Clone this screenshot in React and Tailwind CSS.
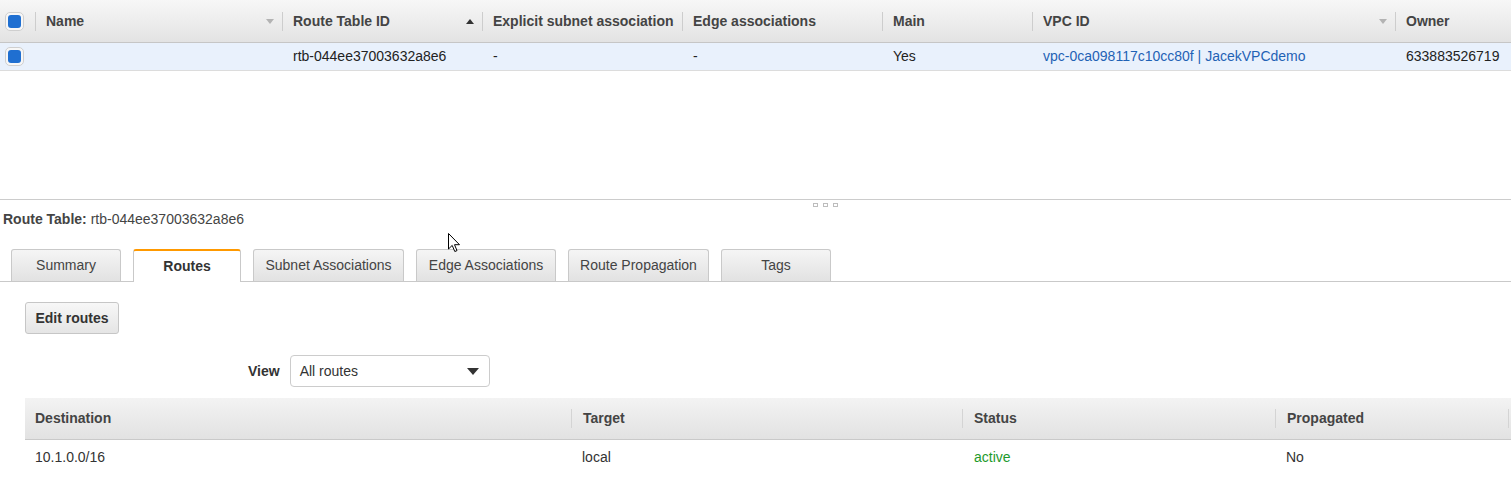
import React from 'react';

const TOP_COLS = [
  { key: 'name', label: 'Name', width: 'w-[247px]', sort: 'down' },
  { key: 'rtb', label: 'Route Table ID', width: 'w-[200px]', sort: 'up' },
  { key: 'explicit', label: 'Explicit subnet associations', width: 'w-[200px]' },
  { key: 'edge', label: 'Edge associations', width: 'w-[200px]' },
  { key: 'main', label: 'Main', width: 'w-[150px]' },
  { key: 'vpc', label: 'VPC ID', width: 'w-[363px]', sort: 'down' },
  { key: 'owner', label: 'Owner', width: 'flex-1' },
];

const ROW = {
  name: '',
  rtb: 'rtb-044ee37003632a8e6',
  explicit: '-',
  edge: '-',
  main: 'Yes',
  vpc: 'vpc-0ca098117c10cc80f | JacekVPCdemo',
  owner: '633883526719',
};

const TABS = [
  { label: 'Summary', width: 'w-[110px]' },
  { label: 'Routes', width: 'w-[108px]', active: true },
  { label: 'Subnet Associations', width: 'w-[151px]' },
  { label: 'Edge Associations', width: 'w-[140px]' },
  { label: 'Route Propagation', width: 'w-[141px]' },
  { label: 'Tags', width: 'w-[110px]' },
];

const ROUTE_COLS = [
  { label: 'Destination', width: 'w-[546px]', first: true },
  { label: 'Target', width: 'w-[391px]' },
  { label: 'Status', width: 'w-[313px]' },
  { label: 'Propagated', width: 'w-[233px]' },
];

function Checkbox() {
  return (
    <div className="w-[19px] h-[19px] rounded-[5px] border border-[#cfcfcf] bg-[#f7f7f7] p-[2px]">
      <div className="w-full h-full rounded-[3px] bg-[#1f6fd1]" />
    </div>
  );
}

function SortIcon({ dir }) {
  if (dir === 'up') {
    return (
      <svg width="8" height="5" viewBox="0 0 8 5" className="shrink-0">
        <path d="M0 5 L4 0 L8 5 Z" fill="#333" />
      </svg>
    );
  }
  return (
    <svg width="8" height="5" viewBox="0 0 8 5" className="shrink-0">
      <path d="M0 0 L8 0 L4 5 Z" fill="#b3b3b3" />
    </svg>
  );
}

function Cursor() {
  return (
    <svg
      width="13"
      height="20"
      viewBox="0 0 13 20"
      className="absolute left-[448px] top-[233px] pointer-events-none"
    >
      <path
        d="M0.5 0.5 L0.5 16 L4.2 12.4 L6.8 18.5 L9 17.6 L6.5 11.7 L11.5 11.7 Z"
        fill="#fff"
        stroke="#000"
        strokeWidth="1"
        strokeLinejoin="round"
      />
    </svg>
  );
}

export default function App() {
  return (
    <div
      className="relative w-[1511px] h-[502px] overflow-hidden bg-white text-[14px] text-[#333]"
      style={{ fontFamily: '"Liberation Sans", Arial, sans-serif' }}
    >
      {/* top grid */}
      <div className="h-[199px]">
        <div className="flex h-[43px] border-b border-[#c6c6c6] bg-gradient-to-b from-[#f7f7f7] to-[#e3e3e3]">
          <div className="w-[35px] shrink-0 flex items-center pl-[5px]">
            <Checkbox />
          </div>
          {TOP_COLS.map((c) => (
            <div key={c.key} className={`${c.width} shrink-0 flex items-center min-w-0`}>
              <div className="w-px h-[19px] bg-[#cdcdcd] shrink-0" />
              <div className="flex flex-1 items-center min-w-0 pl-[10px] pr-[8px]">
                <span className="flex-1 font-bold text-[#444] whitespace-nowrap overflow-hidden">
                  {c.label}
                </span>
                {c.sort && <SortIcon dir={c.sort} />}
              </div>
            </div>
          ))}
        </div>
        <div className="flex h-[28px] border-b border-[#dcdcdc] bg-[#e9f1fc]">
          <div className="w-[35px] shrink-0 flex items-center pl-[5px]">
            <Checkbox />
          </div>
          {TOP_COLS.map((c) => (
            <div
              key={c.key}
              className={`${c.width} shrink-0 flex items-center pl-[11px] whitespace-nowrap overflow-hidden ${
                c.key === 'vpc' ? 'text-[#1f62b5]' : 'text-[#222]'
              }`}
            >
              {ROW[c.key]}
            </div>
          ))}
        </div>
      </div>

      {/* detail pane */}
      <div className="border-t border-[#cccccc]">
        <div className="h-[11px] flex pl-[813px] pt-[3px] gap-[5px]">
          <div className="w-[5px] h-[4px] border border-[#bdbdbd]" />
          <div className="w-[5px] h-[4px] border border-[#bdbdbd]" />
          <div className="w-[5px] h-[4px] border border-[#bdbdbd]" />
        </div>
        <div className="h-[16px] leading-[16px] pl-[3px]">
          <span className="font-bold text-[#444]">Route Table:</span>{' '}
          <span className="text-[#444]">rtb-044ee37003632a8e6</span>
        </div>

        <div className="mt-[22px] flex items-end gap-[12px] pl-[11px] h-[33px] border-b border-[#c9c9c9]">
          {TABS.map((t) =>
            t.active ? (
              <div
                key={t.label}
                className={`${t.width} h-[33px] -mb-px flex items-center justify-center bg-white border border-b-0 border-[#c9c9c9] border-t-2 border-t-[#ff9900] rounded-t-[3px] font-bold text-[#333]`}
              >
                {t.label}
              </div>
            ) : (
              <div
                key={t.label}
                className={`${t.width} h-[32px] flex items-center justify-center bg-gradient-to-b from-[#f5f5f5] to-[#e2e2e2] border border-b-0 border-[#c9c9c9] rounded-t-[3px] text-[#444]`}
              >
                {t.label}
              </div>
            )
          )}
        </div>

        <div className="pl-[25px] mt-[20px]">
          <button className="w-[94px] h-[32px] rounded-[3px] border border-[#c6c6c6] bg-gradient-to-b from-[#f7f7f7] to-[#e5e5e5] font-bold text-[#333]">
            Edit routes
          </button>
        </div>

        <div className="flex items-center mt-[21px] pl-[248px]">
          <span className="font-bold text-[#333]">View</span>
          <div className="ml-[10px] w-[200px] h-[32px] border border-[#cccccc] rounded-[4px] flex items-center justify-between pl-[9px] pr-[10px]">
            <span className="text-[#333]">All routes</span>
            <svg width="12" height="7" viewBox="0 0 12 7">
              <path d="M0 0 L12 0 L6 7 Z" fill="#333" />
            </svg>
          </div>
        </div>

        <div className="ml-[25px] mt-[11px]">
          <div className="flex h-[42px] border-b border-[#c9c9c9] bg-gradient-to-b from-[#f3f3f3] to-[#e2e2e2]">
            {ROUTE_COLS.map((c) => (
              <div key={c.label} className={`${c.width} shrink-0 flex items-center`}>
                {!c.first && <div className="w-px h-[19px] bg-[#d4d4d4] shrink-0" />}
                <span className={`font-bold text-[#444] ${c.first ? 'pl-[10px]' : 'pl-[11px]'}`}>
                  {c.label}
                </span>
              </div>
            ))}
            <div className="w-px h-[19px] bg-[#d4d4d4] shrink-0 self-center" />
          </div>
          <div className="flex h-[34px] items-center">
            <div className="w-[546px] shrink-0 pl-[10px] text-[#333]">10.1.0.0/16</div>
            <div className="w-[391px] shrink-0 pl-[11px] text-[#333]">local</div>
            <div className="w-[313px] shrink-0 pl-[12px] text-[#1d9a2c]">active</div>
            <div className="w-[233px] shrink-0 pl-[11px] text-[#333]">No</div>
          </div>
        </div>
      </div>

      <Cursor />
    </div>
  );
}
